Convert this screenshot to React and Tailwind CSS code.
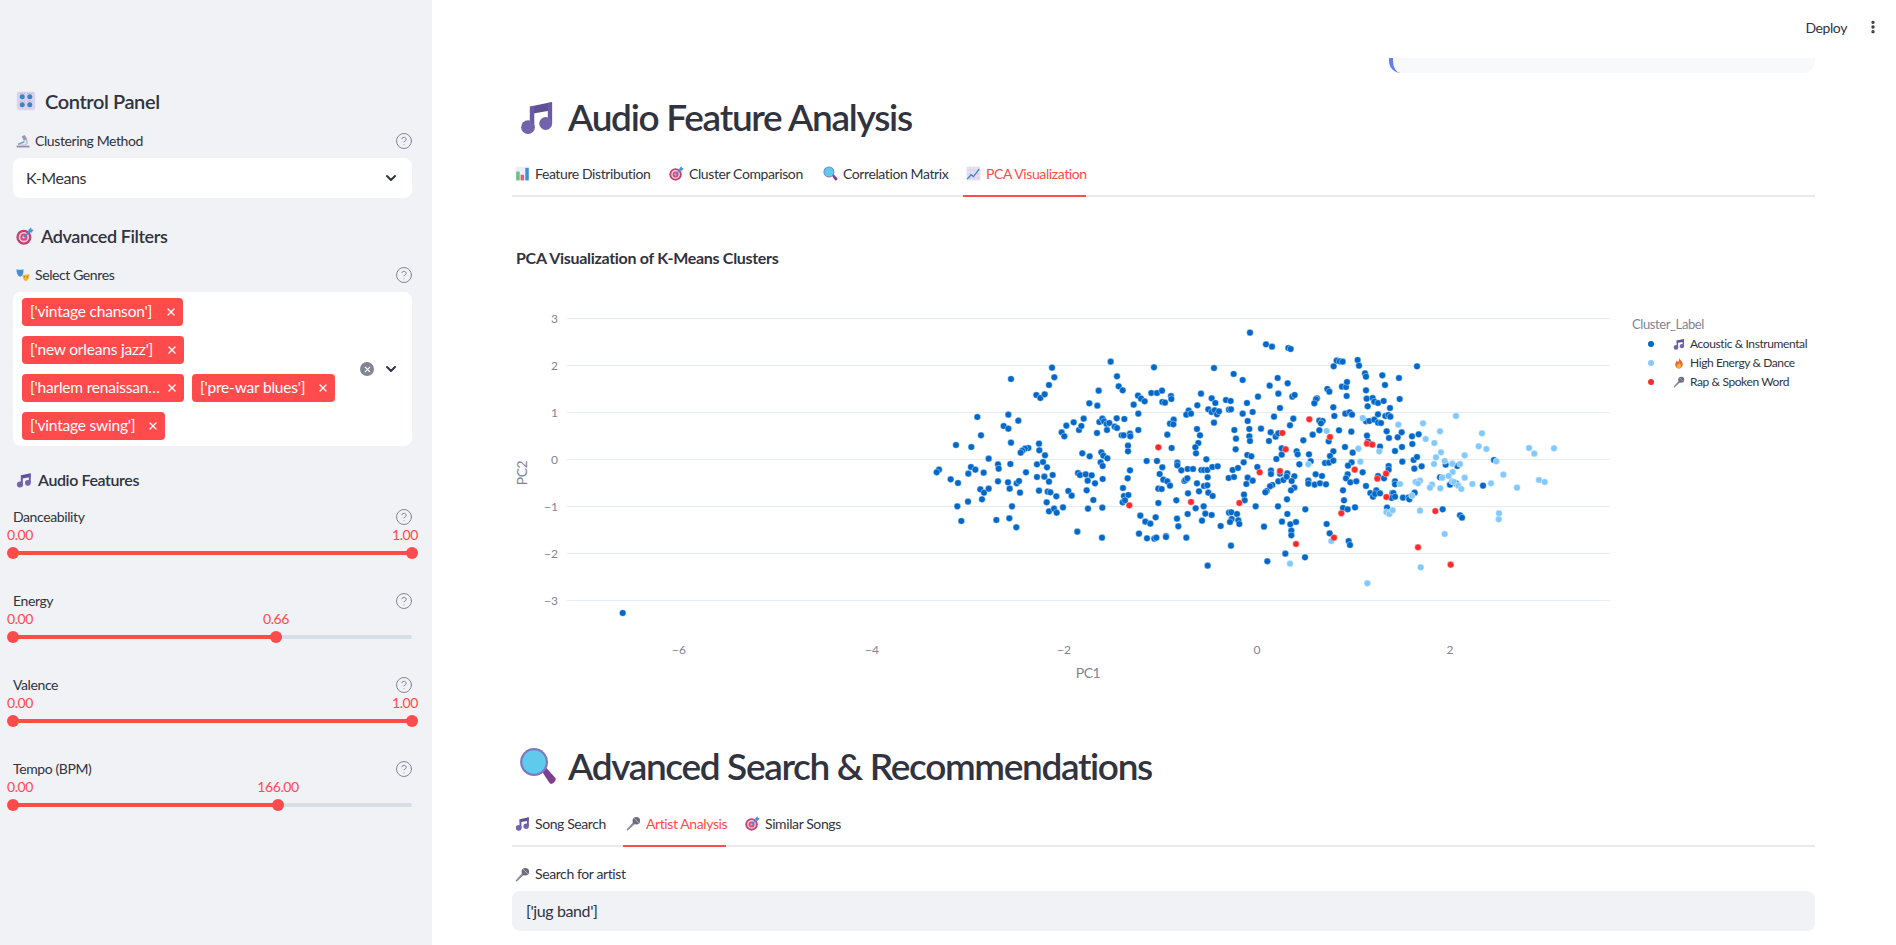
import { ChevronDown, CircleHelp, EllipsisVertical, X } from "lucide-react";

const Music = (props) => (
  <svg viewBox="0 0 24 24" {...props}>
    <path d="M7.500 5 22 2v5.500L7.500 10z" fill="#5f4f93" />
    <path d="M7.200 5h3v14h-3zM19.200 2.500h2.900v13.500h-2.900z" fill="#6a5aa3" />
    <circle cx="6" cy="18.800" r="4.600" fill="#7263ab" />
    <circle cx="17.800" cy="16.300" r="4.300" fill="#7263ab" />
  </svg>
);

const Knobs = (props) => (
  <svg viewBox="0 0 24 24" {...props}>
    <rect x="1" y="1" width="22" height="22" rx="2.500" fill="#d9d3ec" />
    {[[7.500, 7], [16.500, 7], [7.500, 16.500], [16.500, 16.500]].map(([x, y]) => (
      <g key={x + "-" + y}>
        <circle cx={x} cy={y} r="3" fill="#3f82c9" />
        <path d={`M${x - 3} ${y - 4.500}l1 1M${x + 3} ${y - 4.500}l-1 1M${x} ${y - 5}v1`} stroke="#8d97c4" strokeWidth=".9" />
      </g>
    ))}
  </svg>
);

const Microscope = (props) => (
  <svg viewBox="0 0 24 24" {...props}>
    <path d="M1 20h22v3H1z" fill="#8f8aa8" />
    <path d="M13 5l3-1.500 4.500 8c1.300 3.500-1 7.500-5 8H6v-2h8c2.500 0 4-2.500 3-5z" fill="#c9c6d6" />
    <path d="M9.500 4 15 1.500l4 7.500-5.500 2.500z" fill="#9d98b3" />
    <path d="M3 16.500l11-4.500 1 2.500-11 4.500z" fill="#58a6df" />
  </svg>
);

const Target = (props) => (
  <svg viewBox="0 0 24 24" {...props}>
    <circle cx="10.500" cy="13.500" r="10" fill="#c8406f" />
    <circle cx="10.500" cy="13.500" r="7" fill="#eccfdc" />
    <circle cx="10.500" cy="13.500" r="4.700" fill="#d54a80" />
    <circle cx="10.500" cy="13.500" r="1.800" fill="#eccfdc" />
    <path d="M10.500 13.500 19 5" stroke="#3b8fd9" strokeWidth="2" />
    <path d="M16.500 3.500 20 .5l.8 2.700 2.900.3-3.200 4-3.500-.5z" fill="#3b9ae6" />
  </svg>
);

const Masks = (props) => (
  <svg viewBox="0 0 24 24" {...props}>
    <path d="M1 2c3 1.500 8 1.500 11.500 0 .8 5 0 11-5 13C3 14 .5 8 1 2z" fill="#3f8fdc" />
    <path d="M11 11c3 .8 8 .6 12-.7.300 5-1.500 10.700-6 12.200-4-1.300-6.300-6.500-6-11.500z" fill="#f4b03e" />
    <circle cx="14.500" cy="15" r="1" fill="#8a5a10" />
    <circle cx="19.500" cy="15" r="1" fill="#8a5a10" />
  </svg>
);

const BarChart = (props) => (
  <svg viewBox="0 0 24 24" {...props}>
    <rect x="1" y="1" width="22" height="22" fill="#efedf5" />
    <rect x="2" y="9" width="5.500" height="14" fill="#63c384" />
    <rect x="9" y="14" width="5.500" height="9" fill="#e0607e" />
    <rect x="16.500" y="3" width="5.500" height="20" fill="#3d8ed8" />
  </svg>
);

const Magnifier = (props) => (
  <svg viewBox="0 0 24 24" {...props}>
    <path d="M14.500 15.500 17 13l6 6.500c1 1.500-2 4.500-3.500 3.500z" fill="#7d3f8f" />
    <circle cx="9.500" cy="9.500" r="8.800" fill="#7f78c0" />
    <circle cx="9.500" cy="9.500" r="7.400" fill="#5ecbec" />
  </svg>
);

const ChartUp = (props) => (
  <svg viewBox="0 0 24 24" {...props}>
    <rect x="1" y="1" width="22" height="22" fill="#e6e2f2" />
    <path d="M1 7h22M1 13h22M1 19h22M7 1v22M13 1v22M19 1v22" stroke="#cfc9e3" strokeWidth=".8" />
    <path d="M2 21l6-7 4 3 9-12" fill="none" stroke="#3d86d6" strokeWidth="2.200" />
  </svg>
);

const Fire = (props) => (
  <svg viewBox="0 0 24 24" {...props}>
    <path d="M12 1c1 4 7 7 7.500 13.500C19.700 19.500 16 23 12 23s-8-3-7.500-8.500C5 11 7 9.500 7.500 7c1.500 1 2.500 2.500 2.500 4C12 8 13 5 12 1z" fill="#e8642c" />
    <path d="M12.500 10c.5 3 4 4.500 4 8 0 2.800-2 5-4.500 5s-4.500-2-4.500-4.700c0-2.500 1.800-3.300 2.500-5 .8.500 1.300 1.200 1.500 2 .8-1.500 1-3.200.5-5.300z" fill="#f7b23c" />
  </svg>
);

const Mic = (props) => (
  <svg viewBox="0 0 24 24" {...props}>
    <path d="M1 21.500 12 9l3 3L2.500 23.500z" fill="#8d8a99" />
    <circle cx="16.500" cy="7.500" r="6" fill="#6f6b7f" />
    <path d="M13 3.500l7.500 7.500" stroke="#b5b2c0" strokeWidth="1.500" />
  </svg>
);

// positions read off two crops of the plot, crop px / 3 + crop origin
const BLUE_A = [[1047,38],[456,143],[333,177],[463,172],[447,195],[409,225],[421,234],[434,223],[632,125],[651,169],[656,199],[668,211],[596,212],[568,250],[592,257],[762,142],[942,144],[1001,162],[714,227],[723,236],[734,244],[701,254],[754,219],[771,219],[786,212],[787,246],[795,248],[813,228],[814,237],[903,221],[935,235],[946,249],[978,240],[992,243],[892,256],[925,268],[935,276],[944,271],[951,283],[957,274],[987,269],[993,268],[866,272],[859,284],[873,281],[232,291],[325,284],[355,302],[311,318],[325,326],[243,346],[715,281],[650,295],[673,297],[551,296],[521,307],[499,317],[485,337],[493,349],[537,330],[544,318],[591,339],[598,306],[607,296],[612,304],[620,312],[628,309],[644,320],[651,324],[621,330],[665,346],[671,346],[690,341],[691,349],[715,330],[802,344],[821,299],[810,311],[820,313],[891,327],[900,346],[1003,330],[1008,356],[942,308],[168,375],[214,381],[333,368],[417,371],[418,391],[385,384],[375,386],[367,392],[362,398],[684,377],[684,394],[815,384],[895,369],[886,382],[888,400],[1007,388],[547,400],[569,409],[604,397],[610,407],[622,415],[435,406],[266,416],[117,449],[110,457],[213,441],[226,449],[205,461],[251,458],[294,433],[296,446],[331,432],[411,433],[429,426],[441,442],[378,457],[602,427],[608,438],[740,423],[771,423],[787,442],[832,428],[832,436],[844,451],[863,447],[879,447],[904,450],[912,450],[922,450],[919,418],[937,441],[953,439],[998,450],[1014,444],[152,478],[174,489],[294,484],[324,487],[350,490],[357,483],[411,471],[433,470],[447,485],[458,465],[534,459],[540,465],[557,463],[575,466],[563,482],[585,490],[608,477],[683,475],[690,451],[779,462],[790,479],[802,484],[810,497],[853,483],[856,480],[862,475],[923,472],[986,474],[1002,471],[891,490],[912,498],[922,496],[897,514],[925,518],[938,528],[241,508],[252,518],[266,506],[246,538],[329,506],[360,518],[417,512],[443,515],[451,517],[469,529],[505,513],[515,527],[560,511],[669,504],[775,506],[785,507],[864,520],[204,545],[172,559],[336,559],[440,547],[580,540],[672,528],[685,525],[668,547],[675,541],[775,549],[829,541],[184,603],[289,600],[328,595],[349,622],[447,574],[462,566],[470,578],[489,562],[564,566],[607,563],[887,565],[911,559],[721,587],[767,592],[736,605],[751,611],[831,596],[835,619],[863,582],[916,581],[935,585],[906,602],[987,578],[994,577],[1011,582],[995,597],[990,606],[1015,601],[1018,612],[962,618],[532,635],[606,653],[717,641],[741,655],[763,656],[769,653],[798,648],[798,651],[859,653],[993,677],[923,737]].filter(([x]) => x < 1020);
const RED_A = [[775,382],[688,556],[873,546],[1018,549]];
const BLUE_B = [[30,38],[78,73],[96,80],[145,84],[152,87],[290,122],[299,124],[308,125],[353,120],[281,139],[357,137],[531,139],[375,160],[378,170],[427,166],[477,174],[435,195],[8,180],[113,174],[143,190],[89,197],[115,221],[54,230],[157,230],[164,225],[262,207],[268,215],[306,200],[318,201],[321,186],[378,211],[320,228],[231,235],[228,238],[223,250],[21,249],[380,236],[398,234],[403,245],[414,249],[431,243],[479,237],[383,259],[450,264],[280,262],[120,264],[38,276],[8,281],[102,290],[160,296],[23,303],[283,288],[316,281],[329,277],[336,284],[414,283],[436,288],[445,285],[451,290],[238,302],[248,303],[243,310],[150,316],[28,327],[63,326],[378,304],[388,303],[403,299],[414,308],[423,309],[238,331],[297,331],[334,335],[440,334],[485,337],[218,344],[92,337],[107,350],[115,340],[28,349],[30,363],[87,363],[190,361],[266,364],[381,347],[447,354],[473,352],[516,349],[536,343],[384,365],[420,380],[517,372],[315,381],[486,381],[125,385],[280,394],[338,398],[465,393],[170,394],[173,403],[207,403],[125,404],[109,417],[22,405],[34,409],[11,427],[270,408],[212,424],[178,433],[255,429],[267,428],[280,422],[335,427],[324,437],[487,425],[521,420],[531,411],[52,441],[93,452],[93,462],[142,460],[120,461],[446,438],[446,449],[523,446],[545,439],[23,473],[19,492],[38,482],[115,484],[130,480],[140,470],[163,469],[155,483],[227,463],[246,468],[205,482],[205,491],[224,494],[240,490],[258,493],[323,463],[318,475],[331,487],[349,484],[368,457],[414,468],[432,475],[97,495],[90,499],[163,503],[153,511],[80,513],[76,517],[309,511],[378,498],[465,484],[465,493],[12,524],[14,541],[141,538],[47,559],[114,559],[196,568],[312,541],[309,564],[323,568],[345,562],[391,519],[399,530],[409,511],[405,522],[420,520],[441,563],[457,519],[460,519],[455,534],[465,530],[489,533],[505,533],[508,538],[524,518],[142,582],[126,605],[151,613],[168,606],[72,620],[154,632],[154,646],[260,612],[269,640],[326,663],[330,675],[136,701],[82,724],[195,712],[608,568],[660,586],[666,593],[762,420],[617,434],[652,438],[600,472],[630,494],[648,490],[729,497]];
const LIGHT_B = [[368,294],[475,314],[549,310],[648,288],[600,334],[726,340],[557,357],[583,369],[260,333],[355,386],[418,394],[716,379],[739,387],[867,384],[883,401],[942,385],[603,397],[588,412],[674,406],[361,425],[205,433],[582,432],[614,423],[637,431],[660,432],[769,424],[638,456],[607,473],[626,468],[636,484],[642,486],[674,473],[790,464],[897,480],[914,486],[480,492],[527,486],[540,482],[534,490],[576,494],[570,503],[601,505],[655,497],[664,507],[697,492],[753,490],[831,503],[516,527],[540,572],[439,576],[448,582],[458,571],[777,580],[776,598],[614,642],[274,663],[150,731],[542,742],[382,790]];
const RED_B = [[208,298],[127,339],[270,351],[137,388],[381,371],[397,374],[59,457],[120,453],[344,449],[438,461],[412,476],[439,531],[586,573],[304,580],[282,653],[168,672],[534,682],[632,734]];

const fromA = ([x, y]) => [900 + x / 3, 320 + y / 3];
const fromB = ([x, y]) => [1240 + x / 3, 320 + y / 3];

const bluePoints = [[622.7, 613], ...BLUE_A.map(fromA), ...BLUE_B.map(fromB)];
const lightPoints = LIGHT_B.map(fromB);
const redPoints = [...RED_A.map(fromA), ...RED_B.map(fromB)];

const yTicks = [
  { label: "3", y: 318.5 },
  { label: "2", y: 365.5 },
  { label: "1", y: 412.5 },
  { label: "0", y: 459.5 },
  { label: "−1", y: 506.5 },
  { label: "−2", y: 553.5 },
  { label: "−3", y: 600.5 },
];
const xTicks = [
  { label: "−6", x: 679 },
  { label: "−4", x: 872 },
  { label: "−2", x: 1064 },
  { label: "0", x: 1257 },
  { label: "2", x: 1450 },
];
const legend = [
  { color: "#0068c9", Icon: Music, label: "Acoustic & Instrumental", y: 344 },
  { color: "#83c9ff", Icon: Fire, label: "High Energy & Dance", y: 363 },
  { color: "#ff2b2b", Icon: Mic, label: "Rap & Spoken Word", y: 382 },
];

const Dots = ({ points, color }) =>
  points.map(([x, y], i) => (
    <circle key={i} cx={x} cy={y} r="3.3" fill={color} stroke="#fff" strokeWidth="0.4" />
  ));

const PcaChart = () => (
  <svg viewBox="512 280 1303 420" className="mt-[12px] block h-[420px] w-[1303px]">
    {yTicks.map((t) => (
      <g key={t.label}>
        <line x1="567" x2="1610" y1={t.y} y2={t.y} stroke="#e6eaf1" strokeWidth="1" />
        <text x="558" y={t.y + 4} textAnchor="end" fontSize="12" letterSpacing="0" fill="#808495">
          {t.label}
        </text>
      </g>
    ))}
    {xTicks.map((t) => (
      <text key={t.label} x={t.x} y="654" textAnchor="middle" fontSize="12" letterSpacing="0" fill="#808495">
        {t.label}
      </text>
    ))}
    <text x="1088" y="678" textAnchor="middle" fontSize="14" fill="#808495">
      PC1
    </text>
    <text x="527" y="473" textAnchor="middle" fontSize="14" fill="#808495" transform="rotate(-90 527 473)">
      PC2
    </text>
    <Dots points={bluePoints} color="#0068c9" />
    <Dots points={lightPoints} color="#83c9ff" />
    <Dots points={redPoints} color="#ff2b2b" />
    <text x="1632" y="329" fontSize="13" fill="#808495">
      Cluster_Label
    </text>
    {legend.map(({ color, Icon, label, y }) => (
      <g key={label}>
        <circle cx="1651" cy={y} r="3" fill={color} />
        <Icon x="1673" y={y - 6} width="12" height="12" />
        <text x="1690" y={y + 4} fontSize="12" fill="#31333f">
          {label}
        </text>
      </g>
    ))}
  </svg>
);

const Help = () => <CircleHelp size={18} strokeWidth={1.3} className="-mr-[1px] text-[#808495]" />;

const Chevron = () => <ChevronDown size={16} strokeWidth={3} className="text-[#31333f]" />;

const WidgetLabel = ({ icon: Icon, children }) => (
  <div className="flex h-[20px] items-center justify-between">
    <span className="flex items-center text-[14px] leading-[20px]">
      <Icon className="ml-[3px] mr-[5px] h-[14px] w-[14px]" />
      {children}
    </span>
    <Help />
  </div>
);

const Tag = ({ children, width }) => (
  <span className={`flex h-[28px] items-center justify-between rounded-[4px] bg-[#ff4b4b] pl-[8px] pr-[6px] text-[15.5px] tracking-[-0.2px] text-white ${width}`}>
    <span className="truncate">{children}</span>
    <X size={12} strokeWidth={2.5} className="ml-[4px] shrink-0" />
  </span>
);

const Slider = ({ label, value, percent, labelLeft }) => (
  <div className="mb-[36px]">
    <div className="flex h-[20px] items-center justify-between">
      <span className="text-[14px] leading-[20px]">{label}</span>
      <Help />
    </div>
    <div className="relative -mt-[1px] h-[18px] text-[14px] leading-[18px] text-[#ff4b4b]">
      <span className="absolute left-[-6px]">0.00</span>
      <span className="absolute -translate-x-1/2" style={{ left: labelLeft }}>
        {value}
      </span>
    </div>
    <div className="relative mt-[7px] h-[4px] rounded-full bg-[#d9dde7]">
      <div className="h-[4px] rounded-full bg-[#ff4b4b]" style={{ width: percent + "%" }} />
      <div className="absolute top-[-4px] left-[-6px] h-[12px] w-[12px] rounded-full bg-[#ff4b4b]" />
      <div
        className="absolute top-[-4px] ml-[-6px] h-[12px] w-[12px] rounded-full bg-[#ff4b4b]"
        style={{ left: percent + "%" }}
      />
    </div>
  </div>
);

const Tabs = ({ tabs, className }) => (
  <div className={`flex h-[44px] gap-[16px] border-b-2 border-[#e9eaed] ${className}`}>
    {tabs.map(({ icon: Icon, label, active, width }) => (
      <div
        key={label}
        className={`-mb-[2px] flex h-[44px] items-center border-b-2 pb-[2px] pl-[3px] text-[14px] ${width} ${
          active ? "border-[#ff4b4b] text-[#ff4b4b]" : "border-transparent"
        }`}
      >
        <Icon className="mr-[5px] h-[15px] w-[15px] shrink-0" />
        <span className="whitespace-nowrap">{label}</span>
      </div>
    ))}
  </div>
);

const topTabs = [
  { icon: BarChart, label: "Feature Distribution", width: "w-[138px]" },
  { icon: Target, label: "Cluster Comparison", width: "w-[138px]" },
  { icon: Magnifier, label: "Correlation Matrix", width: "w-[127px]" },
  { icon: ChartUp, label: "PCA Visualization", active: true, width: "w-[123px]" },
];
const searchTabs = [
  { icon: Music, label: "Song Search", width: "w-[95px]" },
  { icon: Mic, label: "Artist Analysis", active: true, width: "w-[103px]" },
  { icon: Target, label: "Similar Songs", width: "w-[102px]" },
];

export default function App() {
  return (
    <div className="flex h-[945px] overflow-hidden bg-white font-['Lato',sans-serif] tracking-tight text-[#31333f]">
      <aside className="h-full w-[432px] shrink-0 bg-[#f0f2f6] pl-[13px] pr-[20px] pt-[88px]">
        <h3 className="flex h-[26px] items-center text-[20px] font-semibold">
          <Knobs className="ml-[3px] mr-[9px] h-[20px] w-[20px]" />
          Control Panel
        </h3>
        <div className="mt-[17px]">
          <WidgetLabel icon={Microscope}>Clustering Method</WidgetLabel>
        </div>
        <div className="mt-[7px] flex h-[40px] items-center justify-between rounded-[8px] bg-white pl-[13px] pr-[13px] pb-[1px] text-[16px]">
          K-Means
          <Chevron />
        </div>
        <h3 className="mt-[25px] flex h-[26px] items-center text-[18px] font-semibold">
          <Target className="ml-[3px] mr-[7px] h-[18px] w-[18px]" />
          Advanced Filters
        </h3>
        <div className="mt-[16px]">
          <WidgetLabel icon={Masks}>Select Genres</WidgetLabel>
        </div>
        <div className="mt-[7px] flex h-[154px] items-center rounded-[8px] bg-white pl-[9px] pr-[13px]">
          <div className="flex w-[320px] flex-wrap gap-x-[8px] gap-y-[10px]">
            <Tag width="w-[161px]">['vintage chanson']</Tag>
            <Tag width="w-[162px]">['new orleans jazz']</Tag>
            <Tag width="w-[162px]">['harlem renaissance']</Tag>
            <Tag width="w-[143px]">['pre-war blues']</Tag>
            <Tag width="w-[143px]">['vintage swing']</Tag>
          </div>
          <div className="ml-auto flex items-center gap-[9px]">
            <span className="flex h-[14px] w-[14px] items-center justify-center rounded-full bg-[#808495] text-white">
              <X size={9} strokeWidth={3} />
            </span>
            <Chevron />
          </div>
        </div>
        <h4 className="mt-[21px] flex h-[26px] items-center text-[16px] font-semibold">
          <Music className="ml-[3px] mr-[6px] h-[16px] w-[16px]" />
          Audio Features
        </h4>
        <div className="mt-[14px]">
          <Slider label="Danceability" value="1.00" percent={100} labelLeft={392} />
          <Slider label="Energy" value="0.66" percent={66} labelLeft={263} />
          <Slider label="Valence" value="1.00" percent={100} labelLeft={392} />
          <Slider label="Tempo (BPM)" value="166.00" percent={66.4} labelLeft={265} />
        </div>
      </aside>

      <main className="min-w-0 flex-1">
        <div className="flex h-[58px] items-center justify-end gap-[18px] pb-[4px] pr-[15px] text-[14px]">
          <span>Deploy</span>
          <EllipsisVertical size={16} strokeWidth={3} />
        </div>
        <div className="pl-[80px] pr-[81px]">
          <div className="ml-auto h-[15px] w-[426px] rounded-b-[12px] border-l-4 border-[#667eea] bg-[#f8f9fb]" />
          <h1 className="mt-[14px] flex h-[60px] items-center text-[37px] font-semibold tracking-[-1.3px]">
            <Music className="ml-[7px] mr-[13px] h-[36px] w-[36px]" />
            Audio Feature Analysis
          </h1>
          <Tabs tabs={topTabs} className="mt-[6px]" />
          <h4 className="mt-[51px] pl-[4px] text-[16px] font-bold leading-[20px] tracking-[-0.3px]">
            PCA Visualization of K-Means Clusters
          </h4>
          <PcaChart />
          <h1 className="mt-[36px] flex h-[60px] items-center text-[37px] font-semibold tracking-[-1.35px]">
            <Magnifier className="ml-[7px] mr-[11px] h-[38px] w-[38px]" />
            Advanced Search &amp; Recommendations
          </h1>
          <Tabs tabs={searchTabs} className="mt-[7px]" />
          <div className="mt-[17px] flex items-center text-[14px] leading-[20px]">
            <Mic className="ml-[3px] mr-[5px] h-[15px] w-[15px]" />
            Search for artist
          </div>
          <div className="mt-[7px] flex h-[40px] items-center rounded-[8px] bg-[#f0f2f6] pl-[14px] text-[16px]">
            ['jug band']
          </div>
        </div>
      </main>
    </div>
  );
}
